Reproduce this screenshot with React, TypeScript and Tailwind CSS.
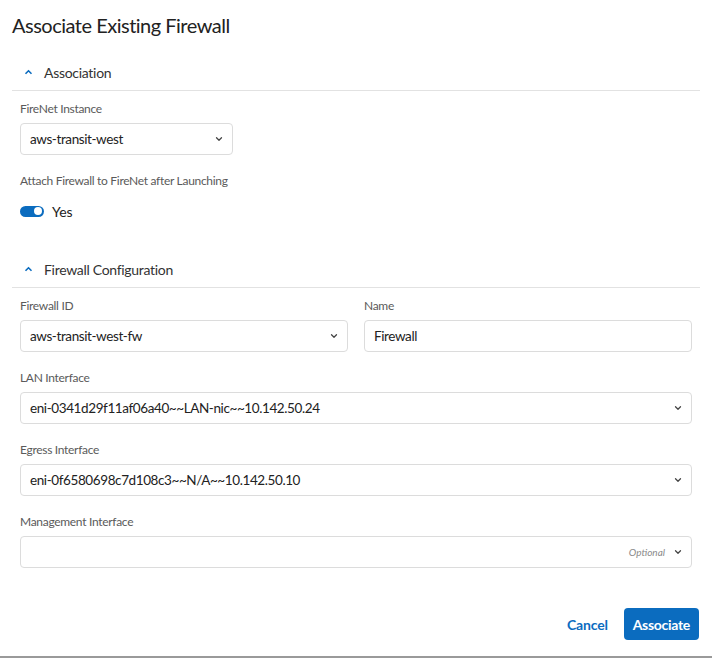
import { ChevronDown } from "lucide-react";

const font = { fontFamily: "Lato, 'Open Sans', sans-serif" };

function Chevron() {
  return (
    <svg width="9" height="6" viewBox="0 0 9 6" className="text-[#0b6cbf]">
      <polyline points="1.5,4.8 4.5,1.8 7.5,4.8" fill="none" stroke="currentColor" strokeWidth="1.6" />
    </svg>
  );
}

function SectionHeader({ title }: { title: string }) {
  return (
    <div className="mx-[12px] h-[37px] flex items-center border-b border-[#e2e2e2]">
      <div className="w-[32px] flex justify-center">
        <Chevron />
      </div>
      <span className="text-[14px] tracking-[-0.3px] text-[#333]">{title}</span>
    </div>
  );
}

function Label({ children }: { children: React.ReactNode }) {
  return <div className="text-[12px] leading-[16px] tracking-[-0.3px] text-[#5a5a5a]">{children}</div>;
}

function Select({ value, optional, className = "" }: { value?: string; optional?: boolean; className?: string }) {
  return (
    <div
      className={`mt-[6px] h-[32px] flex items-center border border-[#dcdcdc] rounded-[4px] pl-[9px] pr-[8px] ${className}`}
    >
      <span className="flex-1 text-[13.5px] tracking-[-0.4px] text-[#222] truncate">{value}</span>
      {optional && <span className="text-[10px] italic text-[#8a8a8a] mr-[8px]">Optional</span>}
      <ChevronDown size={10} strokeWidth={3} className="text-[#444]" />
    </div>
  );
}

export default function App() {
  return (
    <div className="w-[712px] h-[658px] bg-white border-b-2 border-[#9a9a9a] flex flex-col" style={font}>
      <div className="pt-[11px] px-[12px] text-[20px] leading-[28px] tracking-[-0.5px] text-[#222] mb-[15px]">
        Associate Existing Firewall
      </div>

      <SectionHeader title="Association" />
      <div className="px-[20px] pt-[10px]">
        <Label>FireNet Instance</Label>
        <Select value="aws-transit-west" className="w-[213px]" />
        <div className="mt-[18px]">
          <Label>Attach Firewall to FireNet after Launching</Label>
        </div>
        <div className="mt-[12px] h-[20px] flex items-center gap-[8px]">
          <div className="w-[24px] h-[11px] rounded-full bg-[#0b6cbf] flex items-center justify-end pr-[2px]">
            <div className="w-[8px] h-[8px] rounded-full bg-white" />
          </div>
          <span className="text-[14px] text-[#222]">Yes</span>
        </div>
      </div>

      <div className="mt-[30px]">
        <SectionHeader title="Firewall Configuration" />
      </div>
      <div className="px-[20px] pt-[10px] flex flex-col">
        <div className="grid grid-cols-2 gap-[16px]">
          <div>
            <Label>Firewall ID</Label>
            <Select value="aws-transit-west-fw" />
          </div>
          <div>
            <Label>Name</Label>
            <div className="mt-[6px] h-[32px] flex items-center border border-[#dcdcdc] rounded-[4px] pl-[9px]">
              <span className="text-[13.5px] tracking-[-0.4px] text-[#222]">Firewall</span>
            </div>
          </div>
        </div>
        <div className="mt-[18px]">
          <Label>LAN Interface</Label>
          <Select value="eni-0341d29f11af06a40~~LAN-nic~~10.142.50.24" />
        </div>
        <div className="mt-[18px]">
          <Label>Egress Interface</Label>
          <Select value="eni-0f6580698c7d108c3~~N/A~~10.142.50.10" />
        </div>
        <div className="mt-[18px]">
          <Label>Management Interface</Label>
          <Select optional />
        </div>
      </div>

      <div className="mt-[40px] pr-[13px] flex justify-end items-center gap-[16px]">
        <button className="text-[14px] font-bold tracking-[-0.2px] text-[#0b6cbf]">Cancel</button>
        <button className="h-[32px] px-[9px] rounded-[4px] bg-[#0b6cbf] text-white text-[14px] font-bold tracking-[-0.3px]">
          Associate
        </button>
      </div>
    </div>
  );
}
